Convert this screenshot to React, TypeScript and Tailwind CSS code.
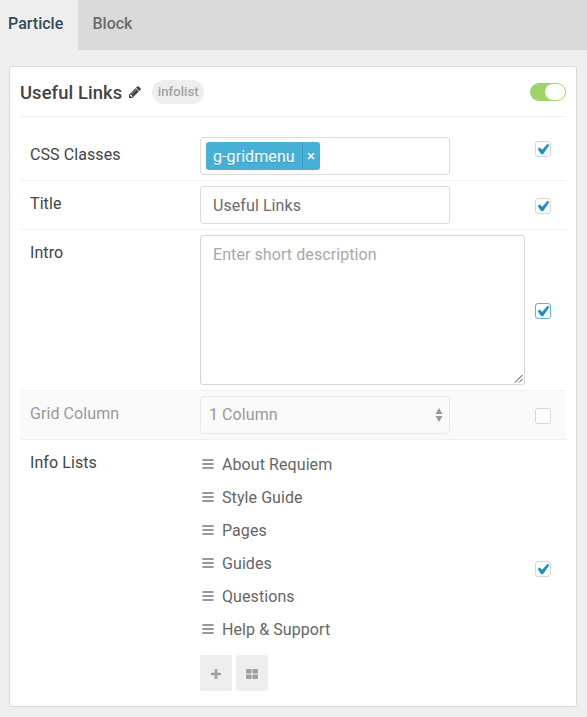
import React from "react";

const links = ["About Requiem", "Style Guide", "Pages", "Guides", "Questions", "Help & Support"];

function Check({ on = true, focus = false }: { on?: boolean; focus?: boolean }) {
  return (
    <span
      className={
        "flex h-4 w-4 shrink-0 items-center justify-center rounded-[3px] border bg-white " +
        (focus ? "border-[#68b0d8]" : "border-[#d5d5d5]")
      }
    >
      {on && (
        <svg
          viewBox="0 0 20 20"
          className="mr-[2px] h-[21px] w-[21px] shrink-0"
          fill="#1e8cbe"
          stroke="#1e8cbe"
          strokeWidth="0.7"
        >
          <path d="M14.83 4.89l1.34.94-5.81 8.38H9.02L5.78 9.67l1.34-1.25 2.57 2.4z" />
        </svg>
      )}
    </span>
  );
}

function Label({ children }: { children: React.ReactNode }) {
  return <div className="w-[180px] shrink-0 pl-[10px] pt-[11px] leading-6">{children}</div>;
}

export default function App() {
  return (
    <div className="h-[717px] w-[587px] bg-[#efefef] font-['Roboto',sans-serif] text-base tracking-[0.08px] text-[#444]">
      <nav className="flex h-[50px] bg-[#dadada] font-medium leading-[48px] tracking-normal">
        <div className="w-[78px] bg-[#efefef] pl-2 text-[#314c59]">Particle</div>
        <div className="pl-[14.5px] text-[#6b6b6b]">Block</div>
      </nav>
      <main className="ml-[9px] mt-4 h-[641px] w-[568px] rounded-[3px] border border-[#d9d9d9] bg-white px-[10px]">
        <header className="flex h-[50px] items-center border-b border-[#eeeeee]">
          <h4 className="pt-[2px] text-[18.4px] font-medium">Useful Links</h4>
          <svg viewBox="0 0 1792 1792" className="ml-[6px] mt-px h-[14px] w-[14px]" fill="#444">
            <path d="M491 1536l91-91-235-235-91 91v107h128v128h107zm523-928q0-22-22-22-10 0-17 7l-542 542q-7 7-7 17 0 22 22 22 10 0 17-7l542-542q7-7 7-17zm-54-192l416 416-832 832h-416v-416zm683 96q0 53-37 90l-166 166-416-416 166-165q36-38 90-38 53 0 91 38l235 234q37 39 37 91z" />
          </svg>
          <span className="ml-[10px] flex h-6 w-[52px] items-center justify-center rounded-full bg-[#eeeeee] pt-px text-[13px] font-medium text-[#a2a2a2]">
            infolist
          </span>
          <span className="ml-auto flex h-[18px] w-9 items-center justify-end rounded-full bg-[#a0d468] pr-px">
            <span className="h-4 w-5 rounded-full bg-white" />
          </span>
        </header>

        <section className="flex h-16 border-b border-[#f2f2f2]">
          <div className="flex pt-[15px]"><Label>CSS Classes</Label></div>
          <div className="mt-5 flex h-[38px] w-[250px] items-center rounded-[3px] border border-[#dddddd] pl-[5px]">
            <div className="flex h-7 w-[114px] rounded-[3px] bg-[#48b0d7] leading-[30px] text-white">
              <span className="w-24 pl-[7px] [text-shadow:0_1px_0_rgba(0,0,0,0.2)]">g-gridmenu</span>
              <span className="flex-1 border-l border-[#3a9dc4] pr-px text-center text-[15px] leading-7">×</span>
            </div>
          </div>
          <div className="ml-[85px] mt-6"><Check /></div>
        </section>

        <section className="flex h-[49px] border-b border-[#f2f2f2]">
          <Label>Title</Label>
          <div className="mt-[5px] h-[38px] w-[250px] rounded-[3px] border border-[#dddddd] pl-3 leading-[38px] text-[#6b6b6b]">
            Useful Links
          </div>
          <div className="ml-[85px] mt-[17px]"><Check /></div>
        </section>

        <section className="flex h-[161px] border-b border-[#f2f2f2]">
          <Label>Intro</Label>
          <div className="mt-[5px] flex h-[150px] w-[325px] justify-between rounded-[3px] border border-[#d5d5d5] pl-3 pt-[7px] leading-6 text-[#a9a9a9]">
            Enter short description
            <svg viewBox="0 0 10 10" className="h-[10px] w-[10px] self-end" stroke="#444" fill="none">
              <path d="M1 8.5L8.5 1M5 8.5L8.5 5" />
            </svg>
          </div>
          <div className="ml-[10px] mt-[73px]"><Check focus /></div>
        </section>

        <section className="flex h-[49px] border-b border-[#f1f1f1] bg-[#fafafa] text-[#999]">
          <Label>Grid Column</Label>
          <div className="mt-[5px] flex h-[38px] w-[250px] items-center justify-between rounded-[5px] border border-[#e8e8e8] pl-2 pr-[6px]">
            1 Column
            <svg viewBox="0 0 8 14" className="h-[14px] w-2" fill="#999">
              <path d="M4 0L7.5 6H.5zM4 14L7.5 8H.5z" />
            </svg>
          </div>
          <div className="ml-[85px] mt-[17px]"><Check on={false} /></div>
        </section>

        <section className="flex">
          <Label>Info Lists</Label>
          <div className="w-[325px] pt-2 text-[#666]">
            {links.map((l) => (
              <div key={l} className="flex h-[33px] items-center">
                <svg viewBox="0 0 12 10" className="mb-[2px] ml-[2px] mr-2 h-[10px] w-3" fill="#999">
                  <path d="M.4 0h11.2v2H.4zM.4 4h11.2v2H.4zM.4 8h11.2v2H.4z" />
                </svg>
                {l}
              </div>
            ))}
            <div className="mt-[9px] flex gap-1">
              <button className="flex h-9 w-8 items-center justify-center rounded-[3px] bg-[#eeeeee]">
                <svg viewBox="0 0 10 10" className="mt-[2px] h-[10px] w-[10px]" fill="#a0a0a0">
                  <path d="M3.7 0h2.6v3.7H10v2.6H6.3V10H3.7V6.3H0V3.7h3.7z" />
                </svg>
              </button>
              <button className="flex h-9 w-8 items-center justify-center rounded-[3px] bg-[#eeeeee]">
                <svg viewBox="0 0 12 10" className="mt-[2px] h-[10px] w-3" fill="#a0a0a0">
                  <rect width="5.6" height="4.6" rx="1" />
                  <rect x="6.4" width="5.6" height="4.6" rx="1" />
                  <rect y="5.4" width="5.6" height="4.6" rx="1" />
                  <rect x="6.4" y="5.4" width="5.6" height="4.6" rx="1" />
                </svg>
              </button>
            </div>
          </div>
          <div className="ml-[10px] mt-[121px]"><Check /></div>
        </section>
      </main>
    </div>
  );
}
